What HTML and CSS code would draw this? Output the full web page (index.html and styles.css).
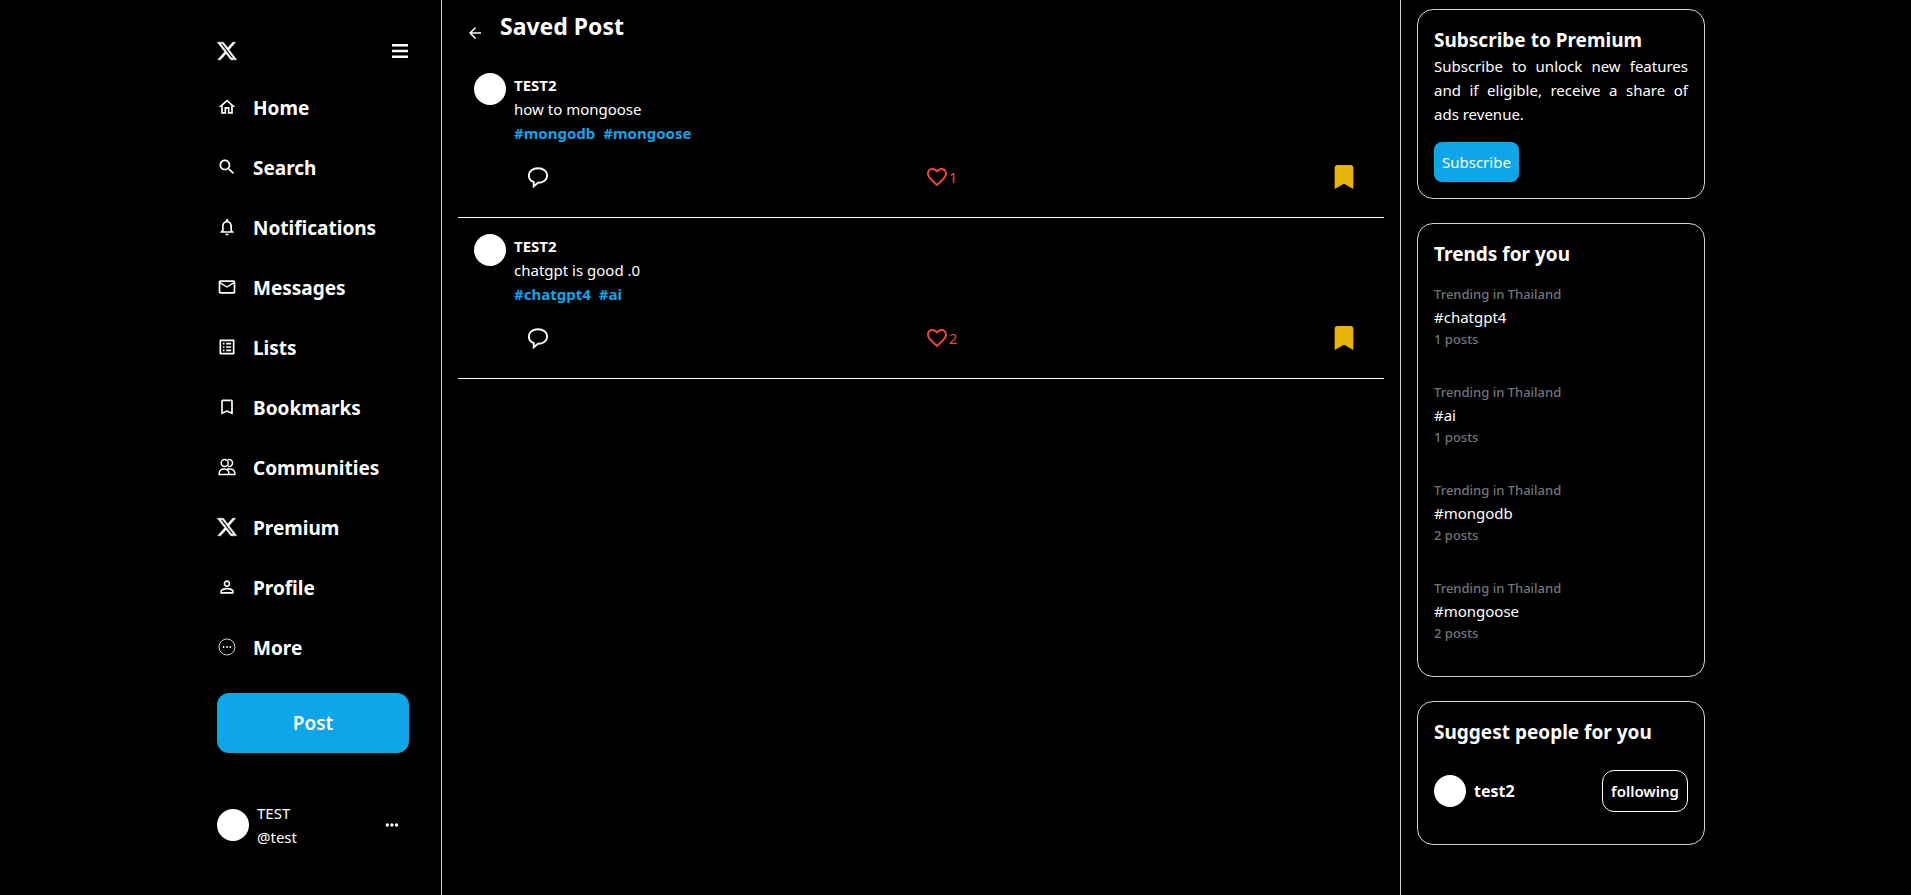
FILE: index.html
```html
<!DOCTYPE html>
<html lang="en">
<head>
<meta charset="utf-8">
<meta name="viewport" content="width=device-width, initial-scale=1">
<title>Saved Post</title>
<link rel="stylesheet" href="styles.css">
</head>
<body>
<svg width="0" height="0" class="sprite" aria-hidden="true">
  <symbol id="x" viewBox="1 1 22 22"><path stroke="currentColor" stroke-width=".4" d="M18.244 2.25h3.308l-7.227 8.26 8.502 11.24H16.17l-5.214-6.817L4.99 21.75H1.68l7.73-8.835L1.254 2.25H8.08l4.713 6.231zm-1.161 17.52h1.833L7.084 4.126H5.117z"/></symbol>
  <symbol id="comment" viewBox="0 0 32 32"><path d="M11.700 21v4.300l4.300-3.600c5.200 0 9.200-3.100 9.200-7.200s-4-7.300-9.200-7.300-9.200 3.200-9.200 7.300c0 3 1.900 5.400 4.900 6.500z" fill="none" stroke="currentColor" stroke-width="1.900"/></symbol>
  <symbol id="heart" viewBox="0 0 24 24"><path d="M16.500 3c-1.740 0-3.410.810-4.500 2.090C10.910 3.810 9.240 3 7.500 3 4.420 3 2 5.420 2 8.500c0 3.780 3.400 6.860 8.550 11.540L12 21.350l1.450-1.320C18.600 15.360 22 12.280 22 8.500 22 5.420 19.580 3 16.500 3zm-4.400 15.550-.1.100-.1-.1C7.140 14.240 4 11.390 4 8.500 4 6.500 5.500 5 7.500 5c1.540 0 3.040.990 3.570 2.360h1.870C13.460 5.990 14.960 5 16.500 5c2 0 3.500 1.500 3.500 3.500 0 2.890-3.140 5.740-7.900 10.050z"/></symbol>
  <symbol id="saved" viewBox="0 0 24 24"><path d="M17 3H7c-1.100 0-2 .9-2 2v16l7-4 7 4V5c0-1.100-.9-2-2-2z"/></symbol>
  <symbol id="dots" viewBox="0 0 20 20"><circle cx="6.300" cy="10" r="1.700"/><circle cx="10.900" cy="10" r="1.700"/><circle cx="15.500" cy="10" r="1.700"/></symbol>
</svg>
<div class="shell">
  <header class="sidebar">
    <div class="brand">
      <a href="#" aria-label="X"><svg class="icon"><use href="#x"/></svg></a>
      <button class="plain" aria-label="Menu"><svg class="icon-menu" viewBox="0 0 17 14"><path d="M0 0h16v2.400H0zM0 5.800h16v2.400H0zM0 11.600h16v2.400H0z"/></svg></button>
    </div>
    <nav class="nav">
      <a href="#"><svg class="icon" viewBox="0 0 24 24"><path d="M12 5.690l5 4.500V18h-2v-6H9v6H7v-7.810l5-4.500M12 3L2 12h3v8h6v-6h2v6h6v-8h3L12 3z"/></svg>Home</a>
      <a href="#"><svg class="icon" viewBox="0 0 24 24"><path d="M15.500 14h-.79l-.28-.27C15.410 12.590 16 11.110 16 9.500 16 5.910 13.090 3 9.500 3S3 5.910 3 9.500 5.910 16 9.500 16c1.610 0 3.090-.59 4.230-1.570l.27.28v.79l5 4.990L20.490 19l-4.990-5zm-6 0C7.010 14 5 11.990 5 9.500S7.010 5 9.500 5 14 7.010 14 9.500 11.990 14 9.500 14z"/></svg>Search</a>
      <a href="#"><svg class="icon" viewBox="0 0 24 24"><path d="M12 22c1.100 0 2-.9 2-2h-4c0 1.100.9 2 2 2zm6-6v-5c0-3.070-1.630-5.640-4.500-6.320V4c0-.83-.67-1.500-1.500-1.500s-1.500.67-1.500 1.500v.68C7.640 5.360 6 7.920 6 11v5l-2 2v1h16v-1l-2-2zm-2 1H8v-6c0-2.480 1.510-4.500 4-4.500s4 2.020 4 4.500v6z"/></svg>Notifications</a>
      <a href="#"><svg class="icon" viewBox="0 0 24 24"><path d="M22 6c0-1.100-.9-2-2-2H4c-1.100 0-2 .9-2 2v12c0 1.100.9 2 2 2h16c1.100 0 2-.9 2-2V6zm-2 0l-8 5-8-5h16zm0 12H4V8l8 5 8-5v10z"/></svg>Messages</a>
      <a href="#"><svg class="icon" viewBox="0 0 24 24"><path d="M11 7h6v2h-6zm0 4h6v2h-6zm0 4h6v2h-6zM7 7h2v2H7zm0 4h2v2H7zm0 4h2v2H7zM20.100 3H3.900c-.5 0-.9.4-.9.9v16.200c0 .4.4.9.9.9h16.200c.4 0 .9-.5.9-.9V3.900c0-.5-.5-.9-.9-.9zM19 19H5V5h14v14z"/></svg>Lists</a>
      <a href="#"><svg class="icon" viewBox="0 0 24 24"><path d="M17 3H7c-1.100 0-2 .9-2 2v16l7-3 7 3V5c0-1.100-.9-2-2-2zm0 15l-5-2.180L7 18V5h10v13z"/></svg>Bookmarks</a>
      <a href="#"><svg class="icon" viewBox="0 0 20 20"><g fill="none" stroke="currentColor" stroke-width="1.500"><circle cx="7.700" cy="6" r="3.500"/><path d="M10.900 2.700a3.500 3.500 0 1 1 0 6.600M2.200 17.600v-1.400c0-2.500 2-4.300 4.800-4.300s4.900 1.800 4.900 4.300v1.400zM10 11.900h2.800c2.900 0 5 1.800 5 4.300v1.400h-6"/></g></svg>Communities</a>
      <a href="#"><svg class="icon"><use href="#x"/></svg>Premium</a>
      <a href="#"><svg class="icon" viewBox="0 0 24 24"><path d="M12 5.900c1.160 0 2.100.94 2.100 2.100s-.94 2.100-2.100 2.100S9.900 9.160 9.900 8s.94-2.100 2.100-2.100m0 9c2.970 0 6.100 1.460 6.100 2.100v1.100H5.900V17c0-.64 3.130-2.100 6.100-2.100M12 4C9.790 4 8 5.790 8 8s1.790 4 4 4 4-1.790 4-4-1.790-4-4-4zm0 9c-2.670 0-8 1.340-8 4v3h16v-3c0-2.660-5.330-4-8-4z"/></svg>Profile</a>
      <a href="#"><svg class="icon" viewBox="0 0 20 20"><circle cx="10" cy="10" r="8" fill="none" stroke="currentColor" stroke-width=".8"/><circle cx="6.600" cy="10" r=".9"/><circle cx="10" cy="10" r=".9"/><circle cx="13.400" cy="10" r=".9"/></svg>More</a>
    </nav>
    <button class="post-button">Post</button>
    <div class="account">
      <span class="avatar"></span>
      <div class="account-name"><div>TEST</div><div>@test</div></div>
      <button class="plain" aria-label="Account options"><svg class="icon"><use href="#dots"/></svg></button>
    </div>
  </header>

  <main class="main">
    <div class="title-bar">
      <a href="#" class="back" aria-label="Back"><svg class="icon-back" viewBox="0 0 24 24"><path d="M20 11H7.830l5.590-5.590L12 4l-8 8 8 8 1.410-1.410L7.830 13H20v-2z"/></svg></a>
      <h1>Saved Post</h1>
    </div>
    <article class="post">
      <span class="avatar"></span>
      <div class="post-body">
        <div class="author">TEST2</div>
        <div>how to mongoose</div>
        <div class="tags"><a href="#">#mongodb</a><a href="#">#mongoose</a></div>
        <div class="actions">
          <button class="plain" aria-label="Reply"><svg class="icon-large"><use href="#comment"/></svg></button>
          <button class="plain like" aria-label="Like"><svg class="icon-like"><use href="#heart"/></svg>1</button>
          <button class="plain save" aria-label="Bookmark"><svg class="icon-large"><use href="#saved"/></svg></button>
        </div>
      </div>
    </article>
    <article class="post">
      <span class="avatar"></span>
      <div class="post-body">
        <div class="author">TEST2</div>
        <div>chatgpt is good .0</div>
        <div class="tags"><a href="#">#chatgpt4</a><a href="#">#ai</a></div>
        <div class="actions">
          <button class="plain" aria-label="Reply"><svg class="icon-large"><use href="#comment"/></svg></button>
          <button class="plain like" aria-label="Like"><svg class="icon-like"><use href="#heart"/></svg>2</button>
          <button class="plain save" aria-label="Bookmark"><svg class="icon-large"><use href="#saved"/></svg></button>
        </div>
      </div>
    </article>
  </main>

  <aside class="aside">
    <section class="card">
      <h2>Subscribe to Premium</h2>
      <p>Subscribe to unlock new features and if eligible, receive a share of ads revenue.</p>
      <button class="subscribe">Subscribe</button>
    </section>
    <section class="card">
      <h2>Trends for you</h2>
      <div class="trend"><small>Trending in Thailand</small><a href="#">#chatgpt4</a><small>1 posts</small></div>
      <div class="trend"><small>Trending in Thailand</small><a href="#">#ai</a><small>1 posts</small></div>
      <div class="trend"><small>Trending in Thailand</small><a href="#">#mongodb</a><small>2 posts</small></div>
      <div class="trend"><small>Trending in Thailand</small><a href="#">#mongoose</a><small>2 posts</small></div>
    </section>
    <section class="card">
      <h2>Suggest people for you</h2>
      <div class="person">
        <span class="avatar"></span>
        <span class="person-name">test2</span>
        <button class="following">following</button>
      </div>
    </section>
  </aside>
</div>
</body>
</html>
```
FILE: styles.css
```css
* { box-sizing: border-box; }

body {
  margin: 0;
  background: #000;
  color: #fff;
  font: 15px/24px "Noto Sans", "Open Sans", sans-serif;
}

h1, h2, p { margin: 0; }
a { color: inherit; text-decoration: none; }
svg { display: block; fill: currentColor; }
.sprite { position: absolute; }

button {
  font: inherit;
  color: inherit;
  cursor: pointer;
}

.plain {
  display: flex;
  align-items: center;
  padding: 0;
  border: 0;
  background: none;
}

.icon { width: 20px; height: 20px; flex: none; }
.icon-menu { width: 17px; height: 14px; }
.icon-back { width: 18px; height: 18px; }
.icon-like { width: 24px; height: 24px; }
.icon-large { width: 32px; height: 32px; }

.avatar {
  flex: none;
  width: 32px;
  height: 32px;
  border-radius: 50%;
  background: #fff;
}

.shell {
  display: grid;
  grid-template-columns: 257px 1fr 321px;
  max-width: 1541px;
  min-height: 100vh;
  margin: 0 auto;
  padding-right: 5px;
}

/* Left navigation */
.sidebar {
  padding: 24px 32px;
  border-right: 1px solid #cbd5e1;
}

.brand {
  display: flex;
  align-items: center;
  justify-content: space-between;
  height: 54px;
}

.nav a {
  display: flex;
  align-items: center;
  gap: 16px;
  height: 60px;
  font-size: 19px;
  font-weight: 700;
}

.nav .icon { margin-bottom: 2px; }

.post-button {
  width: 100%;
  height: 60px;
  margin: 15px 0 48px;
  border: 0;
  border-radius: 12px;
  background: #0ea5e9;
  font-size: 19px;
  font-weight: 600;
}

.account {
  display: flex;
  align-items: center;
  gap: 8px;
  padding-right: 8px;
}

.account-name { flex: 1; }

/* Feed */
.main { padding: 0 16px; }

.title-bar {
  display: flex;
  align-items: flex-start;
  gap: 16px;
  height: 57px;
  padding: 10px 8px 0;
}

.back { padding-top: 14px; }

h1 {
  font-size: 23px;
  line-height: 32px;
  font-weight: 700;
}

.post {
  display: flex;
  gap: 8px;
  padding: 16px;
  border-bottom: 1px solid #fff;
}

.post-body { flex: 1; }
.author { font-weight: 700; }

.tags {
  display: flex;
  gap: 8px;
  color: #0ea5e9;
  font-weight: 700;
}

.actions {
  display: flex;
  align-items: center;
  justify-content: space-between;
  padding: 16px 8px 8px;
}

.like { color: #ef4444; }
.save { color: #eab308; }

/* Right column */
.aside {
  display: flex;
  flex-direction: column;
  gap: 24px;
  padding: 9px 16px;
  border-left: 1px solid #cbd5e1;
}

.card {
  padding: 16px;
  border: 1px solid #cbd5e1;
  border-radius: 16px;
}

h2 {
  font-size: 19px;
  line-height: 28px;
  font-weight: 700;
}

.card p { text-align: justify; }

.subscribe {
  display: block;
  height: 40px;
  margin-top: 16px;
  padding: 0 8px;
  border: 0;
  border-radius: 8px;
  background: #0ea5e9;
}

.trend { padding: 16px 0; }
.trend a { display: block; }

.trend small {
  display: block;
  color: #71757b;
  font-size: 13px;
  line-height: 21px;
  font-weight: 500;
}

.person {
  display: flex;
  align-items: center;
  gap: 8px;
  padding: 24px 0 16px;
}

.person-name {
  flex: 1;
  font-size: 16px;
  font-weight: 700;
}

.following {
  height: 42px;
  padding: 0 8px;
  border: 1px solid #fff;
  border-radius: 12px;
  background: none;
  font-weight: 600;
}
```
